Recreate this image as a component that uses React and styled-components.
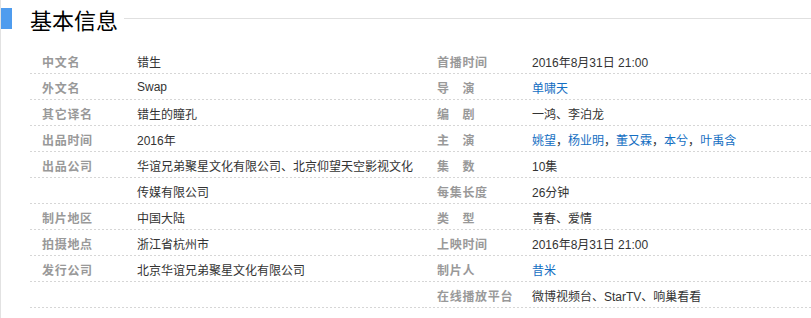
import React from 'react'
import styled, { createGlobalStyle } from 'styled-components'

const GlobalStyle = createGlobalStyle`
  html, body {
    margin: 0;
    padding: 0;
    background: #fff;
  }
  body {
    font-family: "Liberation Sans", Arial, "Noto Sans CJK SC", sans-serif;
    font-size: 12px;
    color: #333;
  }
`

const Page = styled.div`
  min-height: 100vh;
  border-left: 1px solid #e2e2e2;
  box-sizing: border-box;
`

const Header = styled.div`
  display: flex;
  align-items: center;
  height: 37px;
  margin-bottom: 11px;
  &::before {
    content: '';
    width: 11px;
    height: 21px;
    background: #4f9cee;
    flex: none;
  }
`

const Title = styled.h2`
  margin: 0 6px 0 18px;
  font-family: "Noto Sans CJK SC", sans-serif;
  font-size: 22px;
  font-weight: 400;
  line-height: 1;
  color: #000;
  flex: none;
`

const Rule = styled.div`
  flex: 1;
  height: 1px;
  background: #e0e0e0;
`

const Columns = styled.div`
  display: grid;
  grid-template-columns: 395px 1fr;
  padding-left: 29px;
`

const Column = styled.dl`
  margin: 0;
`

const Row = styled.div`
  display: flex;
  align-items: center;
  height: 26px;
  background-image: linear-gradient(to right, #d6d6d6 2px, transparent 2px);
  background-size: 4px 1px;
  background-repeat: repeat-x;
  background-position: left bottom;
`

const Name = styled.dt`
  width: 95px;
  padding-left: 12px;
  flex: none;
  font-family: "Noto Sans CJK SC", sans-serif;
  font-weight: 700;
  font-size: 12px;
  letter-spacing: 0.7px;
  color: #999;
  white-space: pre;
`

const Value = styled.dd`
  margin: 0;
  white-space: nowrap;
  color: #333;
`

const Link = styled.a`
  color: #136ec2;
  text-decoration: none;
`

const left = [
  ['中文名', '错生'],
  ['外文名', 'Swap'],
  ['其它译名', '错生的瞳孔'],
  ['出品时间', '2016年'],
  ['出品公司', '华谊兄弟聚星文化有限公司、北京仰望天空影视文化'],
  ['', '传媒有限公司'],
  ['制片地区', '中国大陆'],
  ['拍摄地点', '浙江省杭州市'],
  ['发行公司', '北京华谊兄弟聚星文化有限公司'],
  ['', ''],
]

const cast = ['姚望', '杨业明', '董又霖', '本兮', '叶禹含']

const right = [
  ['首播时间', '2016年8月31日 21:00'],
  ['导　演', <Link href="#">单啸天</Link>],
  ['编　剧', '一鸿、李泊龙'],
  [
    '主　演',
    cast.map((n, i) => (
      <React.Fragment key={n}>
        {i > 0 && '，'}
        <Link href="#">{n}</Link>
      </React.Fragment>
    )),
  ],
  ['集　数', '10集'],
  ['每集长度', '26分钟'],
  ['类　型', '青春、爱情'],
  ['上映时间', '2016年8月31日 21:00'],
  ['制片人', <Link href="#">昔米</Link>],
  ['在线播放平台', '微博视频台、StarTV、响巢看看'],
]

const InfoColumn = ({ items }) => (
  <Column>
    {items.map(([name, value], i) => (
      <Row key={i}>
        <Name>{name}</Name>
        <Value>{value}</Value>
      </Row>
    ))}
  </Column>
)

export default function App() {
  return (
    <Page>
      <GlobalStyle />
      <Header>
        <Title>基本信息</Title>
        <Rule />
      </Header>
      <Columns>
        <InfoColumn items={left} />
        <InfoColumn items={right} />
      </Columns>
    </Page>
  )
}
